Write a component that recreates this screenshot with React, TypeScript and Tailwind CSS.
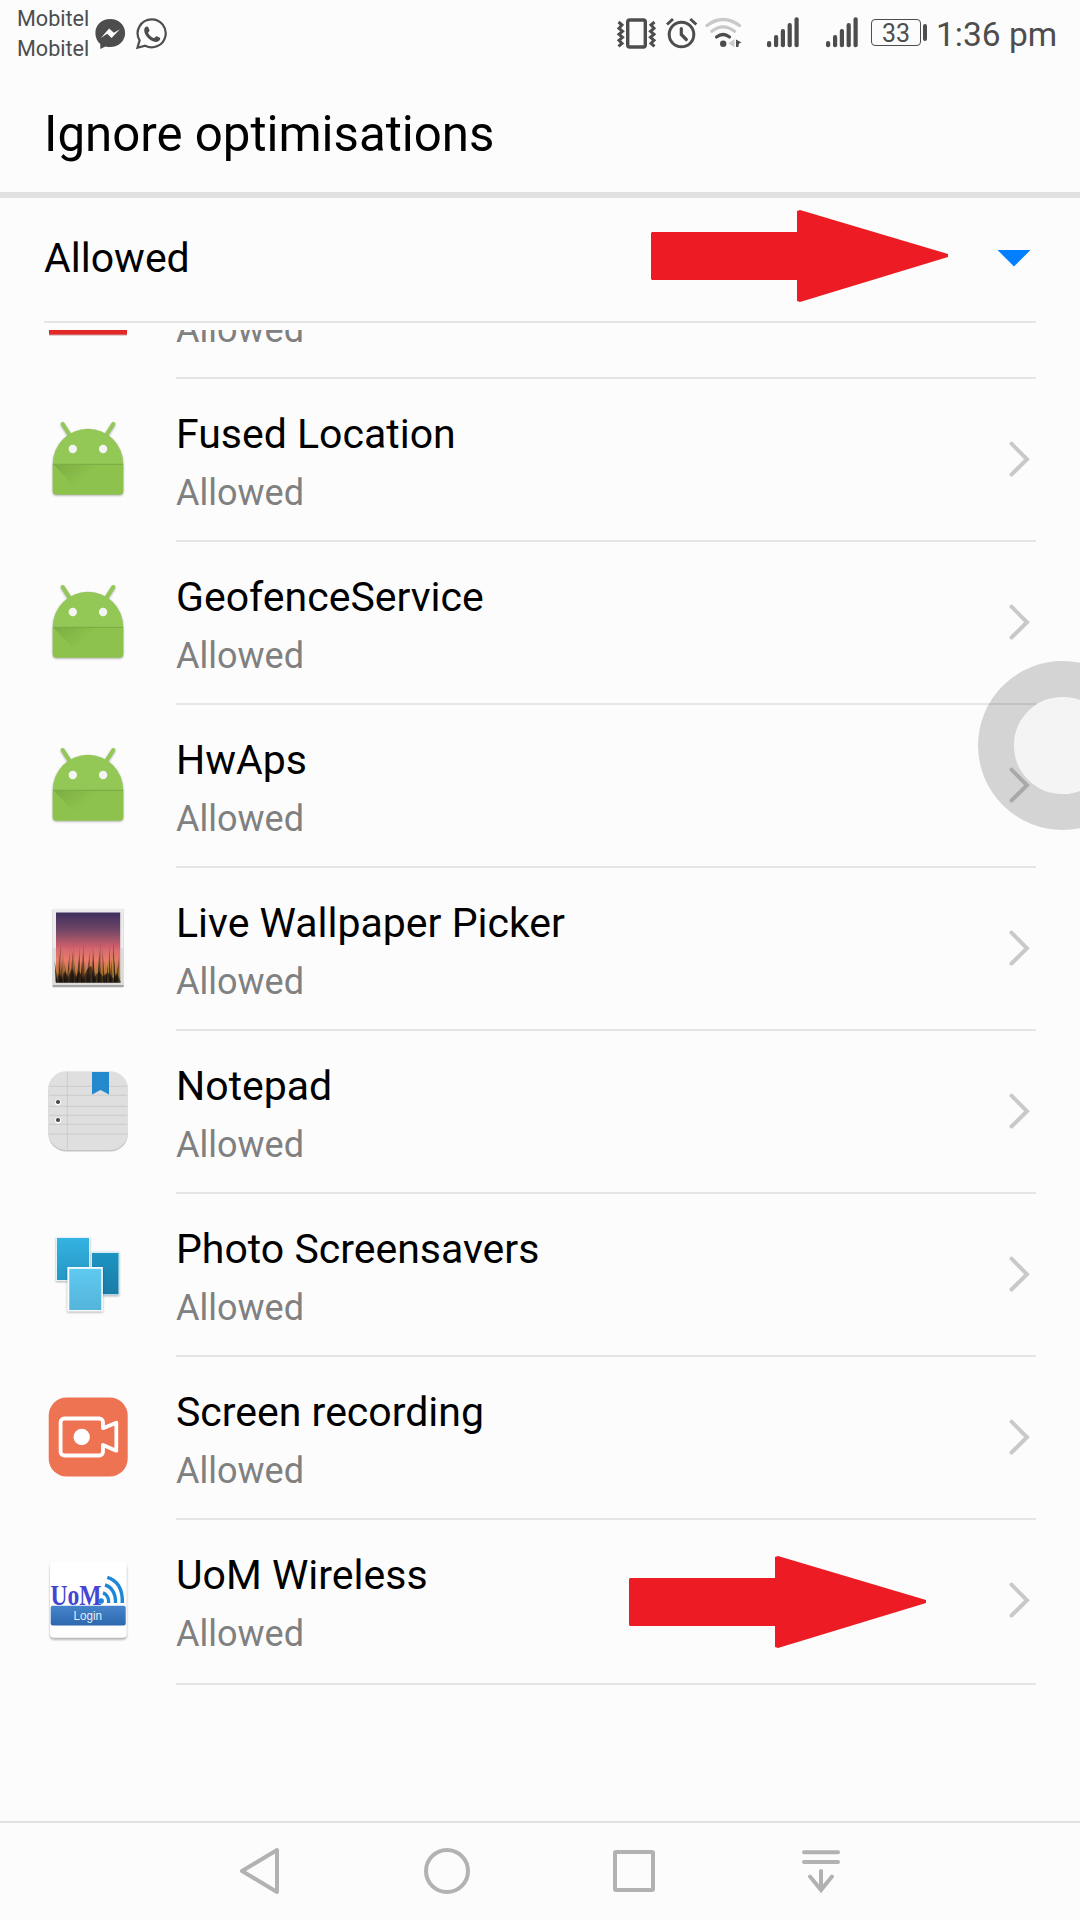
import React from "react";

const INK = "#4d4d4d";

function MessengerIcon() {
  return (
    <svg width="34" height="60" viewBox="94 0 34 60">
      <path
        fill={INK}
        d="M110.2 19c8.400 0 14.900 6 14.900 14s-6.500 14-14.900 14c-1.700 0-3.200-.2-4.700-.6L100.300 49v-4.900C97.200 41.500 95.400 37.500 95.400 33c0-8 6.400-14 14.800-14z"
      />
      <path fill="#fcfcfc" d="M100.800 38l8.300-9.500 4.800 4.200 6-3.400-8.300 8.700-4.400-4.200z" />
    </svg>
  );
}

function WhatsAppIcon() {
  return (
    <svg width="34" height="60" viewBox="135 0 34 60">
      <path
        fill="none"
        stroke={INK}
        strokeWidth="2.200"
        d="M151.700 19.300a14 14 0 1 1-6.500 26.400l-7.700 2 2.100-7.300A14 14 0 0 1 151.700 19.300z"
      />
      <path
        fill={INK}
        d="M146 26.800c1-.5 2-.3 2.400.7l1 2.400c.3.800-.1 1.400-1 2.300-.4.400-.3.700 0 1.200 1.300 2 3 3.500 5.200 4.500.6.300.9.200 1.300-.3 1-1.300 1.500-1.600 2.300-1.200l2.300 1.200c.7.400.9.900.5 2-.7 1.600-2.500 2.500-4.200 2.400-5.500-.4-11.300-6.300-11.600-11.400-.1-1.600.7-3.200 1.800-3.800z"
      />
    </svg>
  );
}

function VibrateIcon() {
  return (
    <svg width="42" height="60" viewBox="616 0 42 60" fill="none" stroke={INK}>
      <rect x="627.700" y="20" width="17.600" height="27" rx="2" strokeWidth="3.400" />
      <path strokeWidth="3" d="M618.500 22.500l3.500 3-3 3.300 3.500 3-3.500 3 3.500 3-3.500 3 3 3-3.500 3" transform="translate(0 -.5)" />
      <path strokeWidth="3" d="M654.500 22.500l-3.500 3 3 3.300-3.500 3 3.500 3-3.500 3 3.500 3-3 3 3.500 3" transform="translate(0 -.5)" />
    </svg>
  );
}

function AlarmIcon() {
  return (
    <svg width="32" height="60" viewBox="666 0 32 60" fill="none" stroke={INK} strokeLinecap="round">
      <circle cx="681.500" cy="34.500" r="12.300" strokeWidth="3" />
      <path strokeWidth="3.200" d="M681.300 28.500v6l5 5" />
      <path strokeWidth="3" strokeLinecap="butt" d="M667 24.500l6-5.500M696.300 24.500l-6-5.500" />
    </svg>
  );
}

function WifiIcon() {
  return (
    <svg width="38" height="60" viewBox="705 0 38 60" fill="none" strokeLinecap="round">
      <path stroke="#c9c9c9" strokeWidth="3.200" d="M707 25.500Q723 13.500 739.500 25.500M711.800 31.300Q723 22.500 734.500 31.300" />
      <path stroke={INK} strokeWidth="3.200" d="M716.500 37Q723.200 32 729.500 37" />
      <circle cx="723.200" cy="43.700" r="3.200" fill={INK} />
      <path fill="#c9c9c9" d="M734.500 39v8.500l-6-4.300z" />
      <path fill={INK} d="M736 39.500l5.500 3-2.500 1-.7 3.500H736z" />
    </svg>
  );
}

function SignalIcon() {
  return (
    <svg width="34" height="60" viewBox="0 0 34 60" fill={INK}>
      <rect x="1" y="41" width="4.200" height="6.300" rx="2" />
      <rect x="8" y="35" width="4.200" height="12.300" rx="2" />
      <rect x="14.800" y="29" width="4.200" height="18.300" rx="2" />
      <rect x="21.600" y="23" width="4.200" height="24.300" rx="2" />
      <rect x="28.500" y="17.300" width="4.200" height="30" rx="2" />
    </svg>
  );
}

function AndroidIcon() {
  return (
    <svg width="96" height="96" viewBox="0 0 96 96">
      <defs>
        <linearGradient id="fold" x1="0" y1="0" x2="1" y2="0.500">
          <stop offset="0" stopColor="#000" stopOpacity=".12" />
          <stop offset="0.550" stopColor="#000" stopOpacity="0" />
        </linearGradient>
      </defs>
      <g className="drop-shadow-[0_1px_1px_rgba(0,0,0,0.35)]">
        <path stroke="#93c756" strokeWidth="4" strokeLinecap="round" d="M22.700 13l8 12.500M73.300 13l-8 12.500" />
        <path fill="#93c756" d="M12.800 53a35.200 35.300 0 0 1 70.400 0v27a3.500 3.500 0 0 1-3.500 3.500H16.300a3.500 3.500 0 0 1-3.500-3.500z" />
      </g>
      <path fill="#8dc34c" d="M12.800 53h70.400v27a3.500 3.500 0 0 1-3.500 3.500H16.300a3.500 3.500 0 0 1-3.500-3.500z" />
      <path fill="url(#fold)" d="M13.500 53.500h69.700v30H42z" />
      <path stroke="#7dae45" strokeWidth="1.200" d="M13 53.300h70" />
      <circle cx="32.800" cy="38" r="4.200" fill="#f4f4f4" />
      <circle cx="63.100" cy="38" r="4.200" fill="#f4f4f4" />
    </svg>
  );
}

const blades = Array.from({ length: 46 }, (_, i) => {
  const x = 16.500 + i * 1.390;
  const tall = (i * 37 + 11) % 29;
  const lean = ((i * 13) % 7) - 3;
  return {
    d: `M${x - 0.900} 82.300L${x + lean * 0.600} ${72 - tall * 1.050}L${x + 0.900} 82.300z`,
    fill: i % 4 === 1 ? (i > 22 ? "#a88a1e" : "#8f5a25") : i % 3 === 0 ? "#140c08" : "#3a1c16",
  };
});

function WallpaperIcon() {
  return (
    <svg width="96" height="96" viewBox="0 0 96 96">
      <defs>
        <linearGradient id="dusk" x1="0" y1="0" x2="0" y2="1">
          <stop offset="0" stopColor="#3c2f5c" />
          <stop offset="0.250" stopColor="#724767" />
          <stop offset="0.500" stopColor="#d0606b" />
          <stop offset="0.680" stopColor="#e87562" />
          <stop offset="0.850" stopColor="#b8702f" />
          <stop offset="1" stopColor="#2a1a08" />
        </linearGradient>
      </defs>
      <rect x="12.500" y="9.500" width="71.300" height="77.800" rx="1" fill="#a5a5a5" />
      <rect x="12.500" y="8.700" width="71.300" height="76.300" rx="1" fill="#ececec" />
      <rect x="12.500" y="48.300" width="71.300" height="36.700" fill="#dcdcdc" />
      <rect x="16" y="12.500" width="64.200" height="70" fill="url(#dusk)" />
      {blades.map((b, i) => (
        <path key={i} d={b.d} fill={b.fill} opacity=".85" />
      ))}
      <path fill="#000" opacity=".6" d="M16 82.500l3-9 3 5 3-8 3 7 4-9 4 9 3-7 4 8 4-9 4-4 3 12 5-6 4 5 5-4 5 6 4-5 4 9z" />
      <rect x="16" y="48.300" width="64.200" height="34" fill="#fff" opacity=".05" />
    </svg>
  );
}

function NotepadIcon() {
  return (
    <svg width="96" height="96" viewBox="0 0 96 96">
      <rect x="8.300" y="9" width="79.700" height="79.500" rx="18" fill="#c4c4c4" />
      <rect x="8.300" y="8.200" width="79.700" height="78.800" rx="18" fill="#dfdfdf" />
      <path stroke="#cbcbcb" strokeWidth="1" d="M9 23.300h78M9 32.300h78M9 43.300h78M9 52.300h78M9 61.300h78M9 71h78M27.300 8.500v78" />
      <path fill="#2488cc" d="M52 9h17V31.500l-8.500-4.500L52 31.500z" />
      {[39, 57].map((y) => (
        <g key={y}>
          <circle cx="18" cy={y + 0.500} r="3" fill="#fff" />
          <circle cx="18" cy={y} r="2.100" fill="#43494e" />
        </g>
      ))}
    </svg>
  );
}

function PhotosIcon() {
  return (
    <svg width="96" height="96" viewBox="0 0 96 96">
      <defs>
        <linearGradient id="sheetA" x1="0" y1="0" x2="0" y2="1">
          <stop offset="0" stopColor="#35b3e2" />
          <stop offset="1" stopColor="#2597c4" />
        </linearGradient>
        <linearGradient id="sheetB" x1="0" y1="0" x2="0" y2="1">
          <stop offset="0" stopColor="#1d94c2" />
          <stop offset="1" stopColor="#1a7ca6" />
        </linearGradient>
        <linearGradient id="sheetC" x1="0" y1="0" x2="0" y2="1">
          <stop offset="0" stopColor="#5fcaf1" />
          <stop offset="1" stopColor="#55b4da" />
        </linearGradient>
      </defs>
      <g className="drop-shadow-[0_1px_1px_rgba(0,0,0,0.3)]">
        <rect x="16" y="11" width="34" height="44" fill="#e4f4fa" />
        <rect x="17" y="12" width="32" height="42" fill="url(#sheetA)" />
      </g>
      <g className="drop-shadow-[0_1px_1px_rgba(0,0,0,0.3)]">
        <rect x="50.700" y="25.700" width="28.600" height="43.500" fill="#d4ebf3" />
        <rect x="52" y="27" width="26.500" height="41.200" fill="url(#sheetB)" />
      </g>
      <g className="drop-shadow-[0_1px_1px_rgba(0,0,0,0.3)]">
        <rect x="27.300" y="41" width="35.600" height="44.500" fill="#f8fcfe" />
        <rect x="29.300" y="42.800" width="32" height="41.200" fill="url(#sheetC)" />
      </g>
    </svg>
  );
}

function RecordIcon() {
  return (
    <svg width="96" height="96" viewBox="0 0 96 96">
      <rect x="8.700" y="8.500" width="79" height="79" rx="18" fill="#ee7352" />
      <path
        fill="none"
        stroke="#fff"
        strokeWidth="3.800"
        strokeLinejoin="round"
        d="M24.300 29.500h35a3.700 3.700 0 0 1 3.700 3.700v6l13.300-5.500v28L63 56v6.800a3.700 3.700 0 0 1-3.700 3.700h-35a3.700 3.700 0 0 1-3.700-3.700V33.200a3.700 3.700 0 0 1 3.700-3.700z"
      />
      <circle cx="41.700" cy="48" r="8.200" fill="#fff" />
    </svg>
  );
}

function UomIcon() {
  return (
    <svg width="96" height="96" viewBox="0 0 96 96">
      <defs>
        <linearGradient id="login" x1="0" y1="0" x2="0" y2="1">
          <stop offset="0" stopColor="#4684cd" />
          <stop offset="1" stopColor="#2c68ae" />
        </linearGradient>
      </defs>
      <rect x="10" y="10.300" width="76.700" height="75.500" rx="4" fill="#fff" className="drop-shadow-[0_2px_1px_rgba(0,0,0,0.3)]" />
      <text x="10.500" y="53" fontSize="30" fontWeight="700" textLength="51" lengthAdjust="spacingAndGlyphs" fill="#4545d2" fontFamily="Liberation Serif, serif">
        UoM
      </text>
      <g fill="none" stroke="#1c86d8" strokeWidth="3.400">
        <path d="M67.300 25.300C77 28 83 37 82.300 51" />
        <path d="M65 33C71 34.500 76 41 75.500 51" />
        <path d="M63 41C66.500 42 69 46 68.700 51" />
      </g>
      <circle cx="61.200" cy="49" r="2.700" fill="#1c86d8" />
      <rect x="10.700" y="53.700" width="75" height="19.700" rx="2" fill="url(#login)" />
      <text x="33.500" y="67.500" fontSize="13.500" textLength="28.500" lengthAdjust="spacingAndGlyphs" fill="#e4edf7" fontFamily="Liberation Sans, sans-serif">
        Login
      </text>
    </svg>
  );
}

function ClippedIcon() {
  return (
    <svg width="96" height="96" viewBox="0 0 96 96">
      <rect x="9" y="9" width="78" height="78.500" fill="#c9a0a0" />
      <rect x="9" y="9" width="78" height="77.500" fill="#e32828" />
    </svg>
  );
}

function Chevron() {
  return (
    <svg width="24" height="40" viewBox="0 0 24 40" fill="none" stroke="#c9c9c9" strokeWidth="4" strokeLinecap="round">
      <path d="M4.500 4.700L20 20.300 4.500 35.500" />
    </svg>
  );
}

function RedArrow() {
  return (
    <svg width="298" height="93" viewBox="0 0 298 93" fill="#ed1c24">
      <path d="M1 22H146V1L149 0 297 44v3L149 92l-3-1V70H1L0 69V23z" />
    </svg>
  );
}

const rows = [
  { name: "Fused Location", icon: <AndroidIcon /> },
  { name: "GeofenceService", icon: <AndroidIcon /> },
  { name: "HwAps", icon: <AndroidIcon /> },
  { name: "Live Wallpaper Picker", icon: <WallpaperIcon /> },
  { name: "Notepad", icon: <NotepadIcon /> },
  { name: "Photo Screensavers", icon: <PhotosIcon /> },
  { name: "Screen recording", icon: <RecordIcon /> },
  { name: "UoM Wireless", icon: <UomIcon />, arrow: true },
];

function AppRow({ name, icon, arrow, bare }: { name: string; icon: React.ReactNode; arrow?: boolean; bare?: boolean }) {
  return (
    <div className={"flex pl-10 pr-11 " + (arrow ? "h-[165px]" : "h-[163px]")}>
      <div className="mt-8 size-24 shrink-0">{icon}</div>
      <div className="relative ml-10 flex flex-1 justify-between border-b-2 border-[#e5e5e5]">
        <div className="pt-[30px]">
          <div className="h-[50px] whitespace-nowrap text-[41px] leading-[50px] text-black">{name}</div>
          <div className="mt-[9px] text-[36px] leading-[50px] text-[#808080]">Allowed</div>
        </div>
        {!bare && (
          <div className="mr-[5px] mt-[60px]">
            <Chevron />
          </div>
        )}
        {arrow && (
          <div className="absolute left-[453px] top-9">
            <RedArrow />
          </div>
        )}
      </div>
    </div>
  );
}

export default function App() {
  return (
    <div className="relative flex h-[1920px] w-[1080px] flex-col overflow-hidden bg-[#fcfcfc] font-['Roboto',sans-serif]">
      <header className="h-[198px] border-b-[6px] border-[#e1e1e1]">
        <div className="flex h-[60px] text-[#4d4d4d]">
          <div className="w-[76px] pl-[17px] pt-1 text-[21.600px] leading-[30px]">
            <div>Mobitel</div>
            <div>Mobitel</div>
          </div>
          <div className="ml-[18px] flex gap-[7px]">
            <MessengerIcon />
            <WhatsAppIcon />
          </div>
          <div className="ml-auto flex pr-[22px]">
            <VibrateIcon />
            <div className="ml-2">
              <AlarmIcon />
            </div>
            <div className="ml-[7px]">
              <WifiIcon />
            </div>
            <div className="ml-[23px] flex gap-[25px]">
              <SignalIcon />
              <SignalIcon />
            </div>
            <div className="ml-3 mt-[19px] flex h-[27px] w-[50px] items-center justify-center rounded-[4px] border border-[#4d4d4d] pt-px text-[25px] leading-[27px]">
              33
            </div>
            <div className="ml-[2px] mt-6 h-[17px] w-1 rounded-full bg-[#4d4d4d]" />
            <div className="ml-[9px] w-[122px] whitespace-nowrap text-[33.500px] leading-[69px]">1:36 pm</div>
          </div>
        </div>
        <h1 className="pl-11 pt-11 text-[49.200px] leading-[60px] text-black">Ignore optimisations</h1>
      </header>

      <section className="relative mx-11 flex h-[125px] items-center justify-between border-b-2 border-[#e5e5e5]">
        <div className="pb-1 text-[41px] leading-[50px] text-black">Allowed</div>
        <svg className="mb-[3px] mr-[5px]" width="34" height="18" viewBox="0 0 34 18">
          <path fill="#007fff" d="M.5 1h33L17 17.500z" />
        </svg>
        <div className="absolute left-[607px] top-3">
          <RedArrow />
        </div>
      </section>

      <main className="mt-[7px] flex-1 overflow-hidden">
        <div className="-mt-[114px]">
          <AppRow name="" icon={<ClippedIcon />} bare />
          {rows.map((r) => (
            <AppRow key={r.name} {...r} />
          ))}
        </div>
      </main>

      <nav className="flex h-[99px] justify-center border-t-2 border-[#e1e1e1] pb-[2px]">
        <div className="grid grid-cols-[repeat(4,187px)] items-center justify-items-center">
          <svg width="48" height="48" viewBox="0 0 48 48" fill="none" stroke="#b2b2b2" strokeWidth="4" strokeLinejoin="round">
            <path d="M41 3v42L6 24z" />
          </svg>
          <svg width="48" height="48" viewBox="0 0 48 48" fill="none" stroke="#b2b2b2" strokeWidth="4">
            <circle cx="24" cy="24" r="21" />
          </svg>
          <svg width="48" height="48" viewBox="0 0 48 48" fill="none" stroke="#b2b2b2" strokeWidth="4">
            <rect x="5" y="5" width="38" height="38" rx="1" />
          </svg>
          <svg width="48" height="48" viewBox="0 0 48 48" fill="none" stroke="#b2b2b2" strokeWidth="4" strokeLinecap="round">
            <path d="M7 5.300h34M7 15h34M24 24v19M13 29.500L24 43l11-13.500" />
          </svg>
        </div>
      </nav>

      <div className="absolute left-[977.500px] top-[660.500px] size-[169px] rounded-full border-[36.500px] border-black/[0.155]">
        <div className="size-full rounded-full bg-black/[0.03]" />
      </div>
    </div>
  );
}
